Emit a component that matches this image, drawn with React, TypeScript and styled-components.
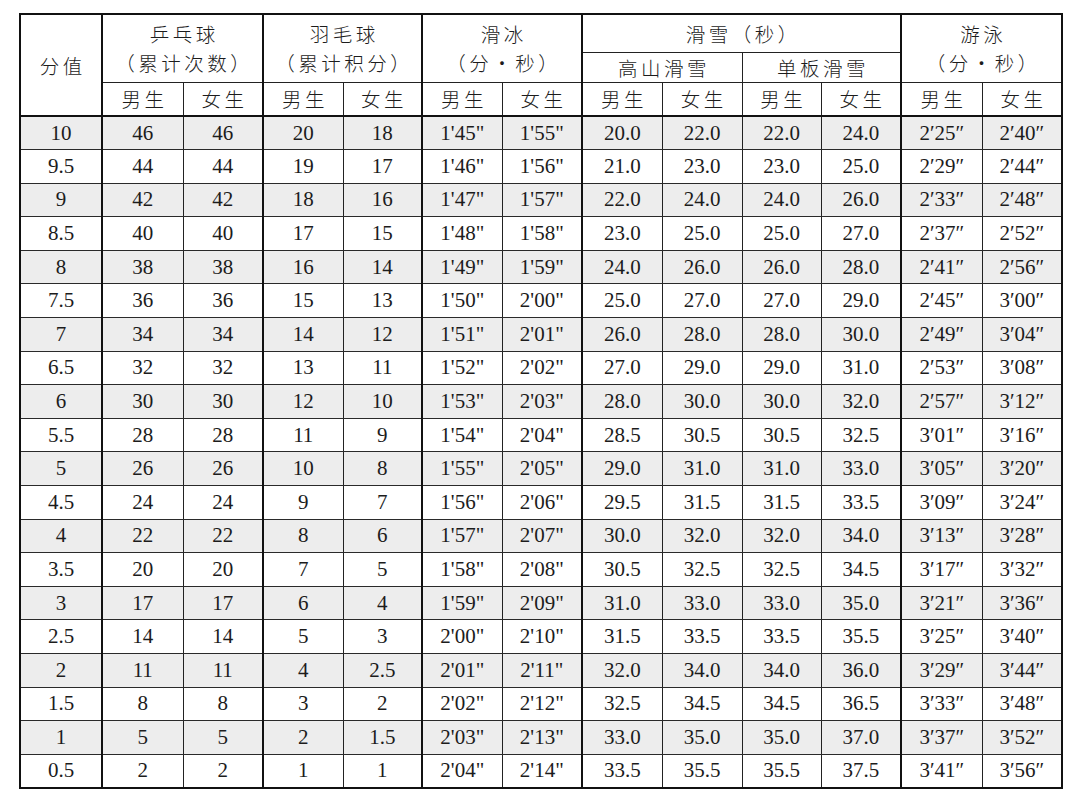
import React from "react";
import styled, { createGlobalStyle } from "styled-components";

const Global = createGlobalStyle`
  html, body { margin: 0; padding: 0; background: #ffffff; }
  body { width: 1080px; height: 802px; overflow: hidden; }
`;

const Page = styled.div`
  padding: 13px 0 0 19px;
  box-sizing: border-box;
  width: 1080px;
  height: 802px;
`;

const Table = styled.table`
  border-collapse: collapse;
  table-layout: fixed;
  width: 1042px;
  border: 2px solid #111;
  color: #1c1c1c;
  font-family: "Liberation Serif", "Times New Roman", "Noto Sans CJK SC", serif;
`;

const Head = styled.thead`
  border-bottom: 2px solid #111;
`;

const HeadRow = styled.tr<{ $h: number }>`
  height: ${(p) => p.$h}px;
`;

const Th = styled.th<{ $thick?: boolean }>`
  font-family: "Noto Sans CJK SC", "Liberation Serif", sans-serif;
  font-weight: 300;
  font-size: 19.5px;
  letter-spacing: 3.5px;
  padding: 0 0 0 3.5px;
  line-height: 29px;
  text-align: center;
  vertical-align: middle;
  border: 1px solid #222;
  border-right: ${(p) => (p.$thick ? "2px solid #111" : "1px solid #222")};
  white-space: nowrap;
`;

const Row = styled.tr<{ $shade: boolean }>`
  height: 33.6px;
  background: ${(p) => (p.$shade ? "#ededed" : "#ffffff")};
`;

const Td = styled.td<{ $thick?: boolean }>`
  font-size: 21px;
  text-align: center;
  vertical-align: middle;
  padding: 0;
  line-height: 1;
  border-top: 1px solid #2a2a2a;
  border-bottom: 1px solid #2a2a2a;
  border-left: 1px solid #222;
  border-right: ${(p) => (p.$thick ? "2px solid #111" : "1px solid #222")};
`;

const scores = ["10", "9.5", "9", "8.5", "8", "7.5", "7", "6.5", "6", "5.5", "5", "4.5", "4", "3.5", "3", "2.5", "2", "1.5", "1", "0.5"];
const pingpong = [46, 44, 42, 40, 38, 36, 34, 32, 30, 28, 26, 24, 22, 20, 17, 14, 11, 8, 5, 2];
const badmM = Array.from({ length: 20 }, (_, i) => String(20 - i));
const badmF = ["18", "17", "16", "15", "14", "13", "12", "11", "10", "9", "8", "7", "6", "5", "4", "3", "2.5", "2", "1.5", "1"];
const skiBase = [20, 21, 22, 23, 24, 25, 26, 27, 28, 28.5, 29, 29.5, 30, 30.5, 31, 31.5, 32, 32.5, 33, 33.5];

const fmt = (sec: number, prime: string, dbl: string) => {
  const m = Math.floor(sec / 60);
  const s = sec % 60;
  return `${m}${prime}${String(s).padStart(2, "0")}${dbl}`;
};

const rows = scores.map((s, i) => [
  s,
  String(pingpong[i]),
  String(pingpong[i]),
  badmM[i],
  badmF[i],
  fmt(105 + i, "'", '"'),
  fmt(115 + i, "'", '"'),
  skiBase[i].toFixed(1),
  (skiBase[i] + 2).toFixed(1),
  (skiBase[i] + 2).toFixed(1),
  (skiBase[i] + 4).toFixed(1),
  fmt(145 + i * 4, "′", "″"),
  fmt(160 + i * 4, "′", "″"),
]);

const thickAfter = new Set([0, 2, 4, 6, 10]);

export default function App() {
  const colWidths = [82, 81, 80, 80, 79, 80, 80, 80, 80, 79, 80, 81, 80];
  return (
    <>
      <Global />
      <Page>
        <Table>
          <colgroup>
            {colWidths.map((w, i) => (
              <col key={i} style={{ width: w }} />
            ))}
          </colgroup>
          <Head>
            <HeadRow $h={38}>
              <Th rowSpan={3} $thick>分值</Th>
              <Th rowSpan={2} colSpan={2} $thick>
                乒乓球
                <br />
                （累计次数）
              </Th>
              <Th rowSpan={2} colSpan={2} $thick>
                羽毛球
                <br />
                （累计积分）
              </Th>
              <Th rowSpan={2} colSpan={2} $thick>
                滑冰
                <br />
                （分·秒）
              </Th>
              <Th colSpan={4} $thick>滑雪（秒）</Th>
              <Th rowSpan={2} colSpan={2}>
                游泳
                <br />
                （分·秒）
              </Th>
            </HeadRow>
            <HeadRow $h={29}>
              <Th colSpan={2}>高山滑雪</Th>
              <Th colSpan={2} $thick>单板滑雪</Th>
            </HeadRow>
            <HeadRow $h={34}>
              {Array.from({ length: 12 }, (_, i) => (
                <Th key={i} $thick={thickAfter.has(i + 1)}>
                  {i % 2 === 0 ? "男生" : "女生"}
                </Th>
              ))}
            </HeadRow>
          </Head>
          <tbody>
            {rows.map((r, ri) => (
              <Row key={ri} $shade={ri % 2 === 0}>
                {r.map((c, ci) => (
                  <Td key={ci} $thick={thickAfter.has(ci)}>
                    {c}
                  </Td>
                ))}
              </Row>
            ))}
          </tbody>
        </Table>
      </Page>
    </>
  );
}
